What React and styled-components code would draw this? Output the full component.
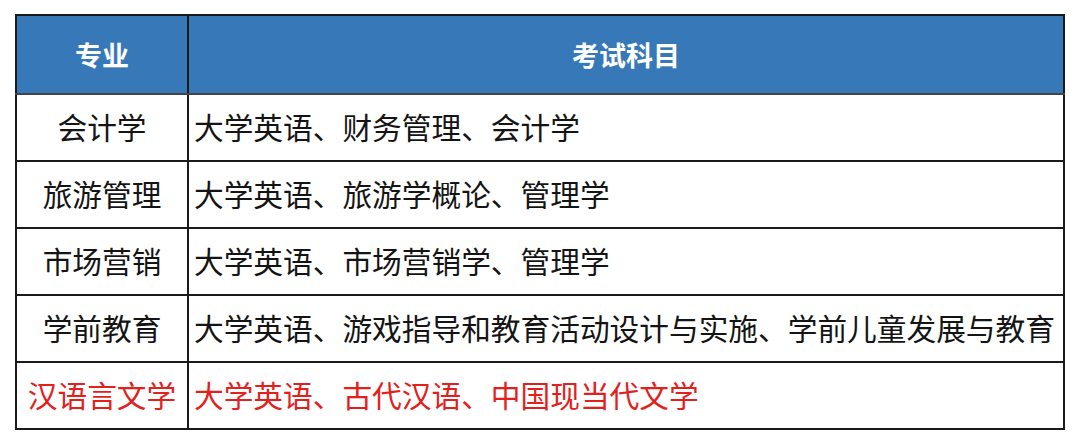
import styled, { createGlobalStyle } from 'styled-components';

const GlobalStyle = createGlobalStyle`
  html, body {
    margin: 0;
    padding: 0;
    background: #fff;
  }
  body {
    font-family: "Noto Sans CJK SC", "Noto Sans", sans-serif;
  }
`

const Page = styled.div`
  width: 1080px;
  height: 445px;
  padding: 14px 0 0 15px;
  box-sizing: border-box;
`

const Table = styled.table`
  width: 1050px;
  border-collapse: collapse;
  table-layout: fixed;
  border: 2px solid #111;
`

const HeadCell = styled.th`
  height: 77px;
  background: #3779b8;
  color: #fff;
  font-size: 27px;
  font-weight: 700;
  text-align: center;
  border: 2px solid #1a1a1a;
  border-bottom-color: #444;
  padding: 0;
`

const Cell = styled.td`
  height: 63px;
  border: 2px solid #1a1a1a;
  font-size: 29.7px;
  color: ${p => (p.$red ? '#e3201b' : '#141414')};
  text-align: ${p => (p.$center ? 'center' : 'left')};
  padding: 0 0 2px ${p => (p.$center ? '0' : '5px')};
  white-space: nowrap;
  line-height: 1.2;
`

const rows = [
  { major: '会计学', subjects: '大学英语、财务管理、会计学' },
  { major: '旅游管理', subjects: '大学英语、旅游学概论、管理学' },
  { major: '市场营销', subjects: '大学英语、市场营销学、管理学' },
  { major: '学前教育', subjects: '大学英语、游戏指导和教育活动设计与实施、学前儿童发展与教育' },
  { major: '汉语言文学', subjects: '大学英语、古代汉语、中国现当代文学', red: true },
]

const App = () => {
  return (
    <Page>
      <GlobalStyle />
      <Table>
        <colgroup>
          <col style={{ width: 172 }} />
          <col />
        </colgroup>
        <thead>
          <tr>
            <HeadCell>专业</HeadCell>
            <HeadCell>考试科目</HeadCell>
          </tr>
        </thead>
        <tbody>
          {rows.map(r => (
            <tr key={r.major}>
              <Cell $center $red={r.red}>{r.major}</Cell>
              <Cell $red={r.red}>{r.subjects}</Cell>
            </tr>
          ))}
        </tbody>
      </Table>
    </Page>
  )
}

export default App
